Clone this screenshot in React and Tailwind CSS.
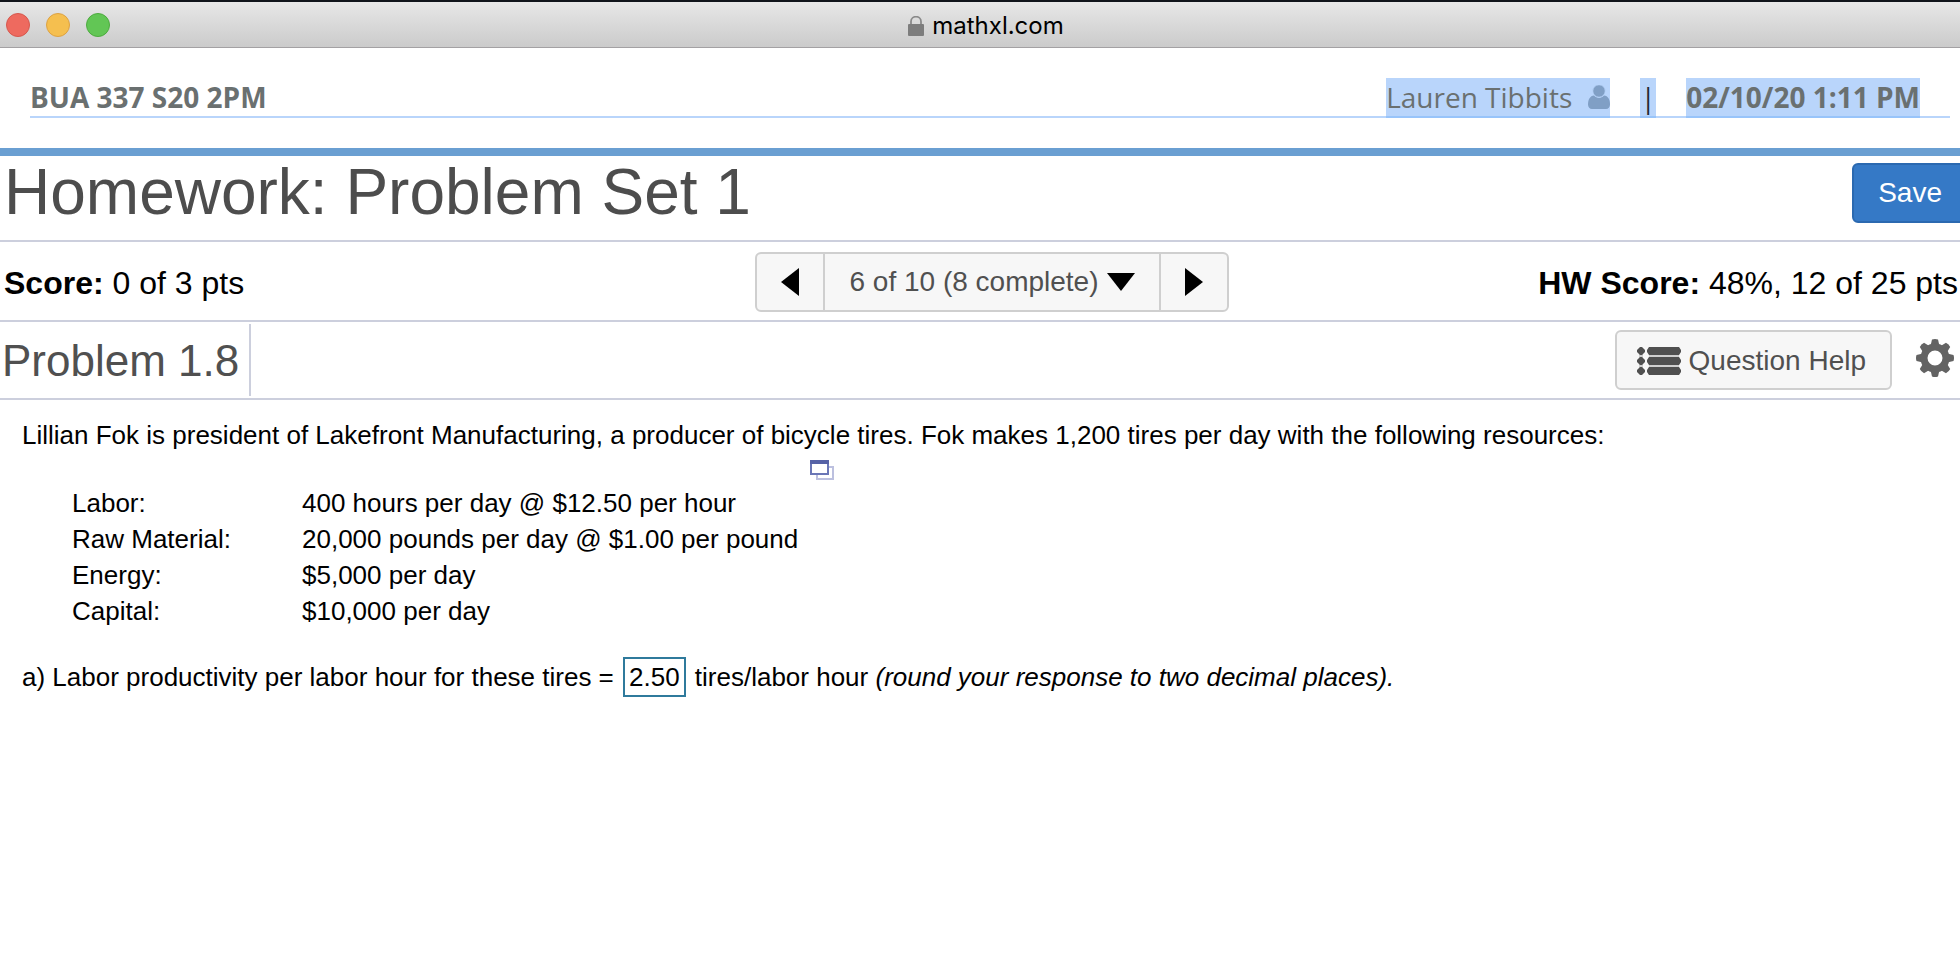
const problemRows = [
  ['Labor:', '400 hours per day @ $12.50 per hour'],
  ['Raw Material:', '20,000 pounds per day @ $1.00 per pound'],
  ['Energy:', '$5,000 per day'],
  ['Capital:', '$10,000 per day'],
];

function LockIcon() {
  return (
    <svg width="16" height="20" viewBox="0 0 16 20" aria-hidden="true">
      <path d="M3 9V5.500a5 4.800 0 0 1 10 0V9" fill="none" stroke="#8a8a8a" strokeWidth="1.800" />
      <rect x="0" y="8" width="16" height="12" rx="1" fill="#7d7d7d" />
    </svg>
  );
}

function UserIcon() {
  return (
    <svg width="22" height="24" viewBox="0 0 22 24" aria-hidden="true">
      <path
        d="M6 10.500c1.300 1.400 3 2.200 5 2.200s3.700-.8 5-2.200c4 .3 6 4 6 9 0 2.600-1.700 4.500-4 4.500H4c-2.300 0-4-1.900-4-4.500 0-5 2-8.700 6-9z"
        fill="#809fc5"
      />
      <circle cx="11" cy="6" r="6.300" fill="#809fc5" stroke="#b9d5fb" strokeWidth="1" />
    </svg>
  );
}

function ListIcon() {
  return (
    <svg width="44" height="28" viewBox="0 0 44 28" aria-hidden="true" fill="#505050">
      <path d="M2 4h4v20H2zM12 4h30v20H12z" fill="#cfcfcf" />
      {[4, 14, 24].map((y) => (
        <g key={y}>
          <path d={`M3 ${y - 4}h2l3 3v2l-3 3h-2l-3-3v-2z`} />
          <path d={`M12 ${y - 4}h30l2 3v2l-2 3h-30l-2-3v-2z`} />
        </g>
      ))}
    </svg>
  );
}

function GearIcon() {
  return (
    <svg width="38" height="38" viewBox="-19 -19 38 38" aria-hidden="true">
      <g fill="#636363">
        {[0, 45, 90, 135, 180, 225, 270, 315].map((a) => (
          <path key={a} transform={`rotate(${a})`} d="M-4.500-12L-3-18.500Q0-19.500 3-18.500L4.500-12z" />
        ))}
      </g>
      <circle r="11" fill="none" stroke="#636363" strokeWidth="7" />
    </svg>
  );
}

function PopupIcon() {
  return (
    <svg width="24" height="20" viewBox="0 0 24 20" aria-hidden="true">
      <path d="M19 7h4v12H7v-4" fill="none" stroke="#bcc0df" strokeWidth="2" />
      <rect x="1" y="1" width="17" height="13" fill="#fff" stroke="#6a76b6" strokeWidth="2" />
      <path d="M0 0h19v4H0z" fill="#5662a6" />
    </svg>
  );
}

export default function App() {
  return (
    <div className="flex min-h-screen flex-col overflow-x-hidden bg-white font-['Liberation_Sans',Arial,sans-serif] text-black">
      <div className="grid h-12 grid-cols-[1fr_auto_1fr] items-center border-t-2 border-b border-t-[#10141a] border-b-[#a3a1a3] bg-linear-to-b from-[#e7e7e7] to-[#cbcbcb]">
        <div className="flex gap-4 pl-1.5">
          <button aria-label="Close" className="size-6 rounded-full border border-[#d6584e] bg-[#ee6a5f]" />
          <button aria-label="Minimize" className="size-6 rounded-full border border-[#dda243] bg-[#f5bf4f]" />
          <button aria-label="Zoom" className="size-6 rounded-full border border-[#4dab3f] bg-[#62c655]" />
        </div>
        <div className="flex items-center gap-2 pt-0.5 pl-3">
          <LockIcon />
          <span className="font-[Inter,sans-serif] text-2xl leading-7">mathxl.com</span>
        </div>
      </div>

      <header className="border-b-8 border-[#6a9fd2] pt-[30px] pr-2.5 pb-[30px] pl-[30px]">
        <div className="flex justify-between border-b-2 border-[#b9d5fb] pr-[30px] font-['Open_Sans',sans-serif] text-[28px] leading-[38px] text-[#6a7070]">
          <span className="font-bold">BUA 337 S20 2PM</span>
          <div className="-mb-0.5 flex gap-[30px]">
            <a href="#account" className="flex items-center gap-4 border-b-2 border-[#98c4fa] bg-[#b9d5fb]">
              Lauren Tibbits
              <UserIcon />
            </a>
            <span className="w-4 border-b-2 border-[#98c4fa] bg-[#b9d5fb] text-center text-[#222b36]">|</span>
            <span className="border-b-2 border-[#98c4fa] bg-[#b9d5fb] font-bold">02/10/20 1:11 PM</span>
          </div>
        </div>
      </header>

      <div className="flex h-[86px] items-start justify-between border-b-2 border-[#cccfdd] pl-1">
        <h1 className="pt-1 text-[64px] leading-[64px] text-[#4d4d4d]">Homework: Problem Set 1</h1>
        <button className="-mr-2 mt-[7px] h-[60px] rounded-md border-2 border-[#2b69b0] bg-[#3579c6] px-6 text-[28px] text-white">
          Save
        </button>
      </div>

      <div className="grid h-20 grid-cols-[1fr_auto_1fr] items-center border-b-2 border-[#cccfdd] pt-0.5 text-[32px] whitespace-nowrap">
        <p className="pt-0.5 pl-1">
          <b>Score:</b> 0 of 3 pts
        </p>
        <nav className="ml-6 flex h-[60px] rounded-md border-2 border-[#cfcfcf] bg-[#f7f7f7] text-[28px] text-[#505050]">
          <button aria-label="Previous question" className="flex w-[66px] items-center justify-center">
            <svg width="18" height="28" viewBox="0 0 18 28" fill="#000"><path d="M18 0v28L0 14z" /></svg>
          </button>
          <button className="flex items-center gap-2 border-x-2 border-[#cfcfcf] px-6">
            6 of 10 (8 complete)
            <svg width="28" height="18" viewBox="0 0 28 18" fill="#000"><path d="M0 0h28L14 18z" /></svg>
          </button>
          <button aria-label="Next question" className="flex w-[66px] items-center justify-center">
            <svg width="18" height="28" viewBox="0 0 18 28" fill="#000"><path d="M0 0v28l18-14z" /></svg>
          </button>
        </nav>
        <p className="pt-0.5 pr-0.5 text-right">
          <b>HW Score:</b> 48%, 12 of 25 pts
        </p>
      </div>

      <div className="flex h-[78px] items-center justify-between border-b-2 border-[#cccfdd]">
        <h2 className="h-[72px] border-r-2 border-[#cccfdd] pr-2.5 pl-0.5 text-[44px] leading-[74px] text-[#505050]">
          Problem 1.8
        </h2>
        <div className="flex items-center gap-6 pr-1.5">
          <button className="flex h-[60px] items-center gap-2 rounded-md border-2 border-[#cfcfcf] bg-[#f7f7f7] pt-0.5 pr-6 pl-5 text-[28px] text-[#505050]">
            <ListIcon />
            Question Help
          </button>
          <button aria-label="Settings" className="pb-1">
            <GearIcon />
          </button>
        </div>
      </div>

      <main className="px-[22px] pt-[17px] text-[26px] leading-9">
        <p>
          Lillian Fok is president of Lakefront Manufacturing, a producer of bicycle tires. Fok makes 1,200 tires per day
          with the following resources:
        </p>
        <div className="flex w-[812px] justify-end pt-[7px] pb-[5px]">
          <button aria-label="Open table in a new window">
            <PopupIcon />
          </button>
        </div>
        <table className="ml-[50px]">
          <tbody>
            {problemRows.map(([name, value]) => (
              <tr key={name}>
                <th scope="row" className="w-[230px] text-left font-normal">{name}</th>
                <td>{value}</td>
              </tr>
            ))}
          </tbody>
        </table>
        <div className="mt-7 flex items-center gap-[9px]">
          <label htmlFor="answer">a) Labor productivity per labor hour for these tires =</label>
          <input
            id="answer"
            defaultValue="2.50"
            className="h-10 w-[63px] border-2 border-[#2f7a9c] bg-white text-center outline-none"
          />
          <p>
            tires/labor hour <i>(round your response to two decimal places).</i>
          </p>
        </div>
      </main>
    </div>
  );
}
